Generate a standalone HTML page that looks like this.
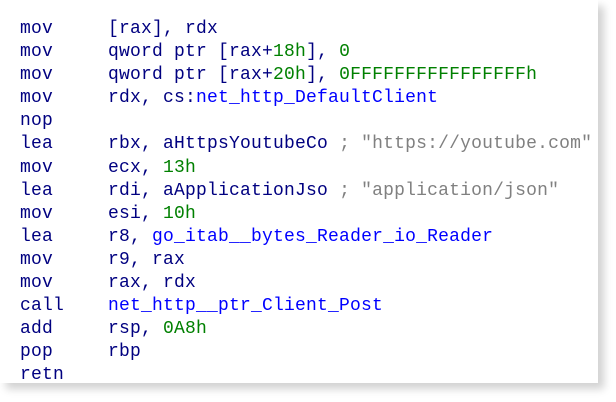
<!DOCTYPE html>
<html><head><style>
html,body{margin:0;padding:0;background:#fff;width:616px;height:402px;overflow:hidden}
.box{position:absolute;left:0;top:0;width:598px;height:383px;background:#fff;box-shadow:6px 6px 8px rgba(0,0,0,0.18)}
pre{position:absolute;left:20px;top:18px;margin:0;font-family:"Liberation Mono",monospace;font-size:18px;line-height:23.1px;color:#000080;letter-spacing:0.2px}
.g{color:#008000}.b{color:#0000ff}.c{color:#808080}
</style></head><body>
<div class="box"></div>
<pre>mov     [rax], rdx
mov     qword ptr [rax+<span class="g">18h</span>], <span class="g">0</span>
mov     qword ptr [rax+<span class="g">20h</span>], <span class="g">0FFFFFFFFFFFFFFFFh</span>
mov     rdx, cs:<span class="b">net_http_DefaultClient</span>
nop
lea     rbx, aHttpsYoutubeCo <span class="c">; "https://youtube.com"</span>
mov     ecx, <span class="g">13h</span>
lea     rdi, aApplicationJso <span class="c">; "application/json"</span>
mov     esi, <span class="g">10h</span>
lea     r8, <span class="b">go_itab__bytes_Reader_io_Reader</span>
mov     r9, rax
mov     rax, rdx
call    <span class="b">net_http__ptr_Client_Post</span>
add     rsp, <span class="g">0A8h</span>
pop     rbp
retn</pre>
</body></html>
